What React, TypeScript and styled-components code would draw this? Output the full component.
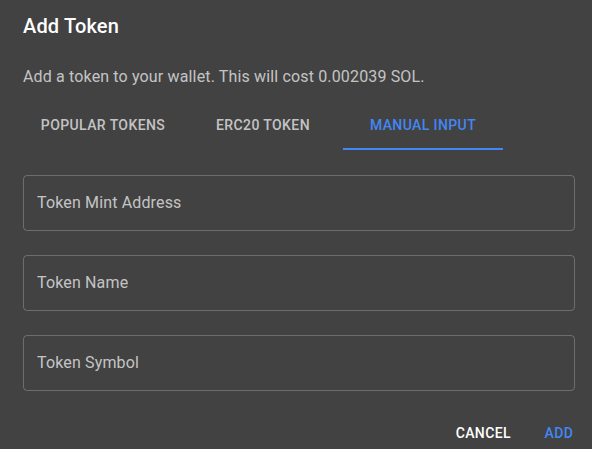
import React from "react";
import styled, { createGlobalStyle } from "styled-components";

const Global = createGlobalStyle`
  html, body { margin: 0; padding: 0; background: #424242; }
  body { font-family: Roboto, "Liberation Sans", Arial, sans-serif; overflow: hidden; }
  * { box-sizing: border-box; }
`;

const BLUE = "#4287f5";

const Dialog = styled.div`
  width: 592px;
  height: 449px;
  background: #424242;
  color: #fff;
  display: flex;
  flex-direction: column;
  overflow: hidden;
`;

const Title = styled.h2`
  margin: 0;
  padding: 10px 17px 0 23px;
  font-size: 20px;
  font-weight: 500;
  line-height: 32px;
  letter-spacing: 0.0075em;
`;

const Content = styled.div`
  padding: 23px 17px 0 23px;
  display: flex;
  flex-direction: column;
`;

const Subtitle = styled.p`
  margin: 0 0 12px;
  font-size: 16px;
  line-height: 24px;
  letter-spacing: 0.00938em;
  color: rgba(255, 255, 255, 0.7);
`;

const TabBar = styled.div`
  display: flex;
  height: 48px;
  margin-top: 0.5px;
`;

const Tab = styled.button<{ $active?: boolean }>`
  width: 160px;
  height: 48px;
  padding: 8px 12px 6px;
  background: none;
  border: none;
  border-bottom: 2px solid ${(p) => (p.$active ? BLUE : "transparent")};
  font-family: inherit;
  font-size: 14px;
  font-weight: 500;
  line-height: 1.75;
  letter-spacing: 0.02857em;
  text-transform: uppercase;
  color: ${(p) => (p.$active ? BLUE : "rgba(255, 255, 255, 0.7)")};
  display: flex;
  align-items: center;
  justify-content: center;
`;

const Fields = styled.div`
  display: flex;
  flex-direction: column;
  gap: 24px;
  margin-top: 25.5px;
`;

const Field = styled.div`
  height: 56px;
  border: 1px solid rgba(255, 255, 255, 0.23);
  border-radius: 4px;
  padding-left: 13px;
  display: flex;
  align-items: center;
`;

const Label = styled.span`
  font-size: 16px;
  line-height: 16px;
  letter-spacing: 0.00938em;
  color: rgba(255, 255, 255, 0.7);
`;

const Actions = styled.div`
  display: flex;
  justify-content: flex-end;
  gap: 8px;
  padding: 0 1px 0 0;
  margin-top: 24px;
`;

const ActionButton = styled.button<{ $primary?: boolean }>`
  min-width: 64px;
  height: 36px;
  padding: 6px 8px;
  background: none;
  border: none;
  border-radius: 4px;
  font-family: inherit;
  font-size: 14px;
  font-weight: 500;
  line-height: 1.75;
  letter-spacing: 0.02857em;
  text-transform: uppercase;
  color: ${(p) => (p.$primary ? BLUE : "#fff")};
`;

export default function App() {
  return (
    <>
      <Global />
      <Dialog>
        <Title>Add Token</Title>
        <Content>
          <Subtitle>Add a token to your wallet. This will cost 0.002039 SOL.</Subtitle>
          <TabBar>
            <Tab>Popular Tokens</Tab>
            <Tab>ERC20 Token</Tab>
            <Tab $active>Manual Input</Tab>
          </TabBar>
          <Fields>
            <Field><Label>Token Mint Address</Label></Field>
            <Field><Label>Token Name</Label></Field>
            <Field><Label>Token Symbol</Label></Field>
          </Fields>
        </Content>
        <Actions>
          <ActionButton>Cancel</ActionButton>
          <ActionButton $primary>Add</ActionButton>
        </Actions>
      </Dialog>
    </>
  );
}
